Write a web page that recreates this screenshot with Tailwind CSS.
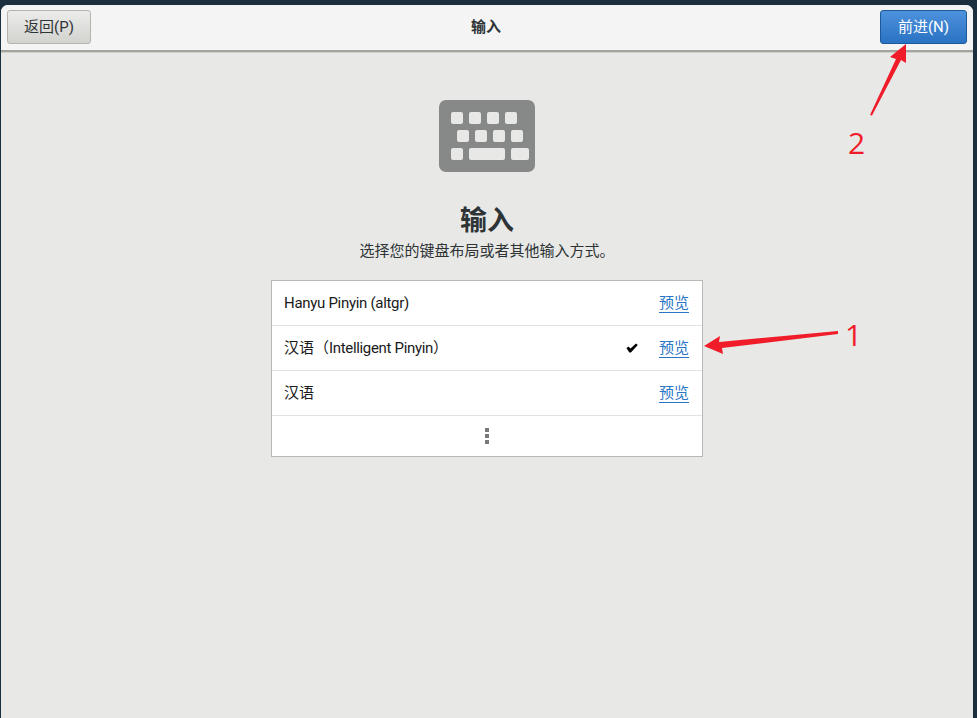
<!DOCTYPE html>
<html lang="zh-CN">
<head>
<meta charset="utf-8">
<script src="https://cdn.jsdelivr.net/npm/@tailwindcss/browser@4"></script>
</head>
<body class="relative w-[977px] h-[718px] overflow-hidden bg-[#1b2f3e] font-['Roboto','Noto_Sans_CJK_SC',sans-serif]">
<div class="ml-[1px] mr-[4px] pt-[5px] h-full">
  <div class="flex flex-col h-full rounded-t-[7px] overflow-hidden bg-[#e8e8e6]">
    <header class="relative flex items-center justify-between h-[47px] shrink-0 px-[6px] pb-[1px] bg-[#f4f4f4] border-b-2 border-[#a4a49e] shadow-[0_1px_0_#d0d0cc]">
      <button class="flex items-center justify-center w-[84px] h-[34px] rounded-[3px] border border-[#b4b4ae] bg-linear-to-b from-[#ececea] to-[#d2d2cf] text-[15px] text-[#2e3436]">返回(P)</button>
      <h1 class="absolute inset-x-0 pr-[2px] text-center text-[15px] font-bold text-[#2e3436]">输入</h1>
      <button class="flex items-center justify-center w-[87px] h-[34px] rounded-[3px] border border-[#1c5a9a] bg-linear-to-b from-[#4d92dc] to-[#2a72c3] text-[15px] text-white">前进(N)</button>
    </header>
    <main class="flex flex-col items-center pt-[48px]">
      <svg class="block" width="96" height="72" viewBox="0 0 96 72" aria-hidden="true">
        <rect width="96" height="72" rx="7" fill="#868988"/>
        <g fill="#e8e8e6">
          <rect x="12" y="12" width="12" height="12" rx="2"/><rect x="30" y="12" width="12" height="12" rx="2"/><rect x="48" y="12" width="12" height="12" rx="2"/><rect x="66" y="12" width="12" height="12" rx="2"/>
          <rect x="18" y="30" width="12" height="12" rx="2"/><rect x="36" y="30" width="12" height="12" rx="2"/><rect x="54" y="30" width="12" height="12" rx="2"/><rect x="72" y="30" width="12" height="12" rx="2"/>
          <rect x="12" y="48" width="12" height="12" rx="2"/><rect x="30" y="48" width="36" height="12" rx="2"/><rect x="72" y="48" width="18" height="12" rx="2"/>
        </g>
      </svg>
      <h2 class="mt-[31px] h-[36px] leading-[36px] text-[27px] font-bold text-[#2e3436]">输入</h2>
      <p class="mt-[2px] h-[20px] leading-[20px] text-[15px] text-[#2e3436]">选择您的键盘布局或者其他输入方式。</p>
      <div class="mt-[19px] w-[432px] h-[177px] flex flex-col bg-white border border-[#b8b8b4] text-[15px] text-[#1a1a1a]">
        <div class="flex items-center h-[45px] shrink-0 pl-[12px] pr-[13px] border-b border-[#e2e2e0]">
          <span class="grow tracking-[-0.3px]">Hanyu Pinyin (altgr)</span>
          <a class="text-[#2a76c6] underline underline-offset-[4px]">预览</a>
        </div>
        <div class="flex items-center h-[45px] shrink-0 pl-[12px] pr-[13px] border-b border-[#e2e2e0]">
          <span class="grow">汉语（<span class="tracking-[-0.33px]">Intelligent Pinyin</span>）</span>
          <svg class="mr-[21px]" width="12" height="10" viewBox="0 0 12 10" aria-hidden="true"><path d="M0.5 5.2 L2.5 3.4 L4.5 5.6 L10 0.6 L11.8 2 L4.9 9.6 L3.4 9.6 Z" fill="#000"/></svg>
          <a class="text-[#2a76c6] underline underline-offset-[4px]">预览</a>
        </div>
        <div class="flex items-center h-[45px] shrink-0 pl-[12px] pr-[13px] border-b border-[#e2e2e0]">
          <span class="grow">汉语</span>
          <a class="text-[#2a76c6] underline underline-offset-[4px]">预览</a>
        </div>
        <div class="flex flex-col items-center justify-center gap-[2px] grow">
          <span class="block w-[4px] h-[4px] bg-[#777a78]"></span>
          <span class="block w-[4px] h-[4px] bg-[#777a78]"></span>
          <span class="block w-[4px] h-[4px] bg-[#777a78]"></span>
        </div>
      </div>
    </main>
  </div>
</div>
<svg class="absolute left-0 top-0 pointer-events-none" width="977" height="718" viewBox="0 0 977 718" aria-hidden="true">
  <polygon points="704,346 720,336 719,342 838,331 838,334 722,348 723,354" fill="#f01c2a"/>
  <polygon points="906,44 890,57 896,59 870,115 872,115.5 901,60 906,63" fill="#f01c2a"/>
</svg>
<span class="absolute left-[845px] top-[316px] text-[30px] leading-[38px] font-['Open_Sans',sans-serif] font-normal text-[#f01c2a]">1</span>
<span class="absolute left-[848px] top-[124px] text-[30px] leading-[38px] font-['Open_Sans',sans-serif] font-normal text-[#f01c2a]">2</span>
</body>
</html>
